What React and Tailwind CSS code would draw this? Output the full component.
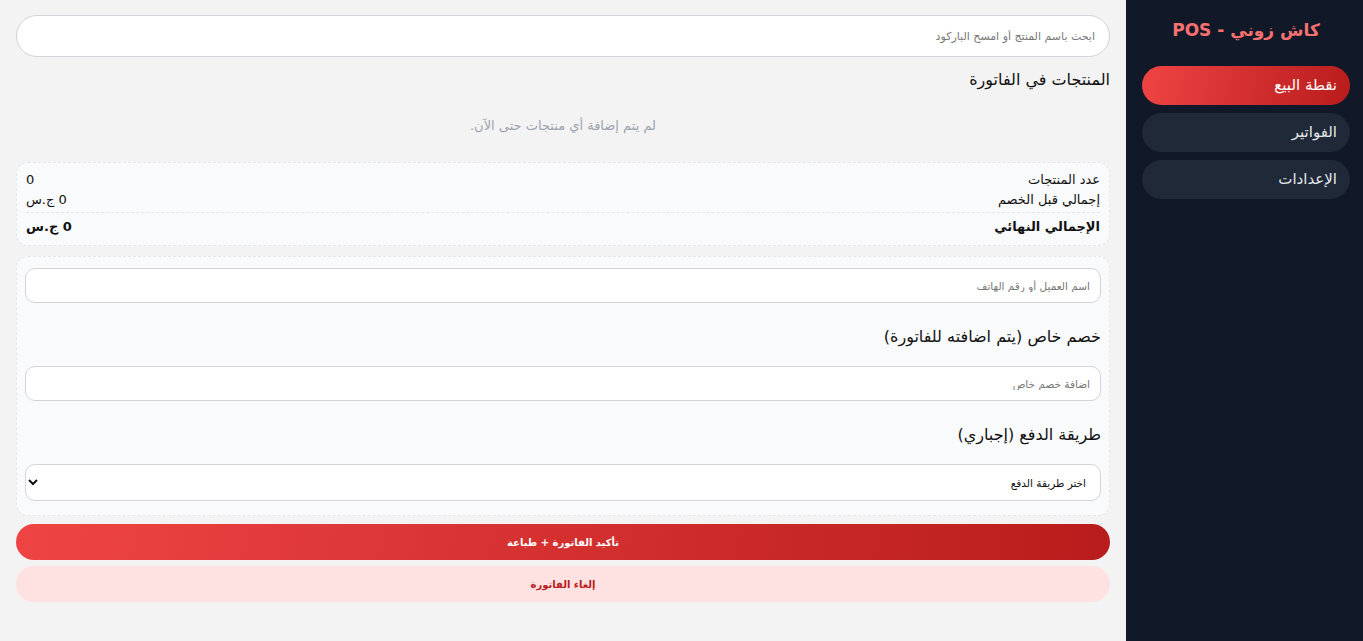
import React from "react";

const navItems = [
    { label: "نقطة البيع", active: true },
    { label: "الفواتير" },
    { label: "الإعدادات" },
];

const Sidebar = () => (
    <aside className="w-[237px] shrink-0 bg-[#111827] pt-[16px] pr-[13px] pl-[16px] flex flex-col">
        <h1 className="text-center text-[17px] font-bold text-[#f87171] h-[28px] leading-[28px] mb-[22px]">
            كاش زوني - POS
        </h1>
        <nav className="flex flex-col gap-[8px]">
            {navItems.map((item) => (
                <a
                    key={item.label}
                    href="#"
                    className={
                        item.active
                            ? "h-[39px] flex items-center px-[13px] rounded-full text-[15px] text-white bg-linear-[100deg] from-[#ef4444] to-[#b91c1c]"
                            : "h-[39px] flex items-center px-[13px] rounded-full text-[15px] text-[#e5e7eb] bg-[#1f2937]"
                    }
                >
                    {item.label}
                </a>
            ))}
        </nav>
    </aside>
);

const SummaryRow = ({ label, value, bold }) => (
    <div className={"flex justify-between items-center text-[13px] leading-[20px] text-[#111] " + (bold ? "font-bold" : "")}>
        <span>{label}</span>
        <span>{value}</span>
    </div>
);

const App = () => {
    return (
        <div dir="rtl" className="flex h-screen bg-[#f3f3f3] overflow-hidden" style={{ fontFamily: '"DejaVu Sans", "Noto Sans", sans-serif' }}>
            <Sidebar />
            <main className="flex-1 px-[16px] pt-[15px] flex flex-col">
                <input
                    type="text"
                    placeholder="ابحث باسم المنتج أو امسح الباركود"
                    className="h-[42px] w-full rounded-full border border-[#d4d4d8] bg-white px-[14px] text-[11px] placeholder:text-[#777] outline-none"
                />
                <h2 className="mt-[12px] text-[16px] text-[#111] leading-[22px]">المنتجات في الفاتورة</h2>
                <p className="text-center text-[13px] text-[#9ca3af] mt-[25px] mb-[26px] leading-[20px]">لم يتم إضافة أي منتجات حتى الآن.</p>

                <section className="rounded-xl border border-dashed border-[#e5e7eb] bg-[#f9fafb] px-[9px] pt-[7px] pb-[8px] flex flex-col">
                    <div className="flex flex-col pb-[2px]">
                        <SummaryRow label="عدد المنتجات" value="0" />
                        <SummaryRow label="إجمالي قبل الخصم" value="0 ج.س" />
                    </div>
                    <div className="border-t border-dashed border-[#e5e7eb] pt-[4px]">
                        <SummaryRow label="الإجمالي النهائي" value="0 ج.س" bold />
                    </div>
                </section>

                <section className="mt-[10px] rounded-xl border border-dashed border-[#e5e7eb] bg-[#f9fafb] px-[8px] pt-[11px] pb-[14px] flex flex-col">
                    <input
                        type="text"
                        placeholder="اسم العميل أو رقم الهاتف"
                        className="h-[35px] w-full rounded-[10px] border border-[#d4d4d8] bg-white px-[10px] text-[10.5px] placeholder:text-[#777] outline-none"
                    />
                    <h3 className="mt-[23px] text-[16px] text-[#111] leading-[22px]">خصم خاص (يتم اضافته للفاتورة)</h3>
                    <input
                        type="text"
                        placeholder="اضافة خصم خاص"
                        className="mt-[18px] h-[35px] w-full rounded-[10px] border border-[#d4d4d8] bg-white px-[10px] text-[10.5px] placeholder:text-[#777] outline-none"
                    />
                    <h3 className="mt-[23px] text-[16px] text-[#111] leading-[22px]">طريقة الدفع (إجباري)</h3>
                    <select
                        className="mt-[18px] h-[37px] w-full rounded-[10px] border border-[#d4d4d8] bg-white px-[10px] text-[10.5px] text-[#111] outline-none"
                        defaultValue=""
                    >
                        <option value="">اختر طريقة الدفع</option>
                        <option value="cash">نقدي</option>
                        <option value="bank">تحويل بنكي</option>
                    </select>
                </section>

                <button className="mt-[8px] h-[36px] w-full rounded-full bg-linear-[100deg] from-[#ef4444] to-[#b91c1c] text-white text-[10px] font-bold">
                    تأكيد الفاتورة + طباعة
                </button>
                <button className="mt-[6px] h-[36px] w-full rounded-full bg-[#fee2e2] text-[#b91c1c] text-[10px] font-bold">
                    إلغاء الفاتورة
                </button>
            </main>
        </div>
    );
};

export default App;
